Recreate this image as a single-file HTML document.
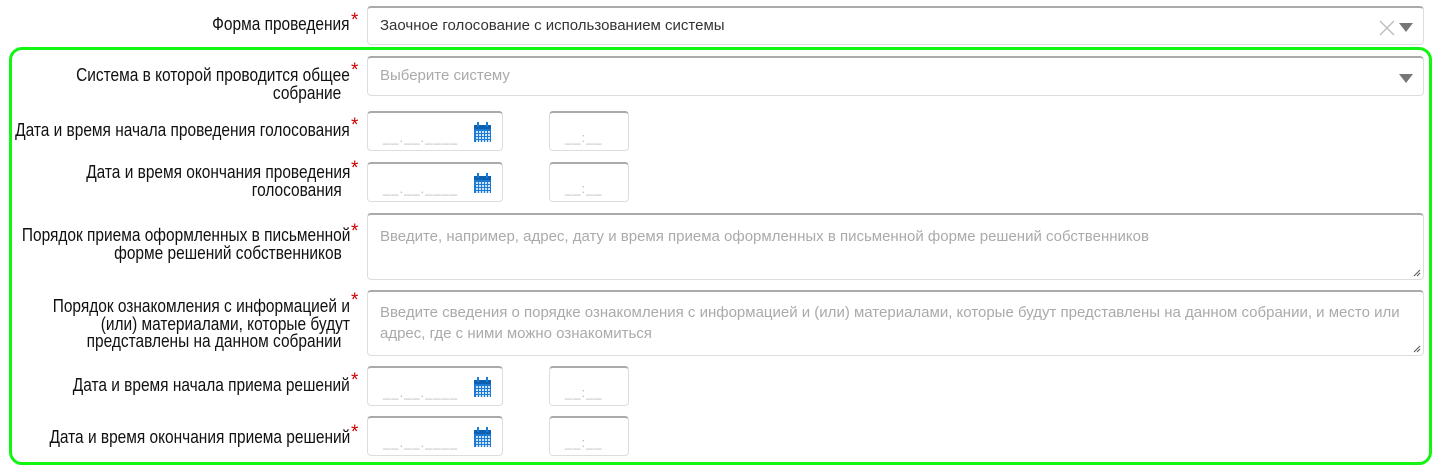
<!DOCTYPE html>
<html><head><meta charset="utf-8"><style>
body{margin:0;width:1434px;height:467px;background:#fff;position:relative;overflow:hidden;font-family:"Liberation Sans",sans-serif}
.lbl{position:absolute;right:1084px;text-align:right;font-family:"Liberation Sans",sans-serif;font-size:18.5px;line-height:17.5px;color:#111;white-space:nowrap;transform:scaleX(0.835);transform-origin:right top}
.st{position:absolute;left:351px;color:#c00;font-size:19px;font-family:"Liberation Sans",sans-serif}
.box{position:absolute;box-sizing:border-box;border:1px solid #ddd;border-top:2px solid #aaa;border-radius:4px;background:#fff;font-size:15px;color:#aaa}
.grn{position:absolute;left:9px;top:47px;width:1423px;height:418px;box-sizing:border-box;border:3.5px solid #12f512;border-radius:13px}
.ph{position:absolute;left:12px;top:9px}
.cal{position:absolute;left:105px;top:9px}
.dm{position:absolute;left:15px;top:17px;color:#bbb;font-size:13px;letter-spacing:1px}
.arr{position:absolute;right:10px;top:15px;width:0;height:0;border-left:7px solid transparent;border-right:7px solid transparent;border-top:9px solid #777}
.rs{position:absolute;right:2px;bottom:2px}
</style></head><body>
<div class="grn"></div>

<div class="lbl" style="top:15px">Форма проведения</div><div class="st" style="top:10px">*</div>
<div class="box" style="left:367px;top:6px;width:1057px;height:39px;color:#333"><span class="ph">Заочное голосование с использованием системы</span>
<svg style="position:absolute;right:28px;top:12px" width="16" height="16"><path d="M1 1L15 15M15 1L1 15" stroke="#bbb" stroke-width="1.3"/></svg><div class="arr"></div></div>

<div class="lbl" style="top:66px">Система в которой проводится общее<br>собрание&nbsp;&nbsp;</div><div class="st" style="top:60px">*</div>
<div class="box" style="left:367px;top:56px;width:1057px;height:40px"><span class="ph">Выберите систему</span><div class="arr" style="top:16px"></div></div>

<div class="lbl" style="top:121px">Дата и время начала проведения голосования</div><div class="st" style="top:115px">*</div>
<div class="lbl" style="top:163px">Дата и время окончания проведения<br>голосования&nbsp;&nbsp;</div><div class="st" style="top:158px">*</div>
<div class="lbl" style="top:226px">Порядок приема оформленных в письменной<br>форме решений собственников&nbsp;&nbsp;</div><div class="st" style="top:221px">*</div>
<div class="lbl" style="top:297px">Порядок ознакомления с информацией и<br>(или) материалами, которые будут<br>представлены на данном собрании&nbsp;&nbsp;</div><div class="st" style="top:290px">*</div>
<div class="lbl" style="top:376px">Дата и время начала приема решений</div><div class="st" style="top:370px">*</div>
<div class="lbl" style="top:428px">Дата и время окончания приема решений</div><div class="st" style="top:422px">*</div>

<div class="box" style="left:367px;top:213px;width:1057px;height:67px"><span class="ph" style="top:13px">Введите, например, адрес, дату и время приема оформленных в письменной форме решений собственников</span>
<svg class="rs" width="8" height="8"><path d="M7 1L1 7M7 4L4 7" stroke="#555" stroke-width="1"/></svg></div>
<div class="box" style="left:367px;top:290px;width:1057px;height:66px;line-height:21px"><span class="ph" style="top:10px;right:14px">Введите сведения о порядке ознакомления с информацией и (или) материалами, которые будут представлены на данном собрании, и место или адрес, где с ними можно ознакомиться</span>
<svg class="rs" width="8" height="8"><path d="M7 1L1 7M7 4L4 7" stroke="#555" stroke-width="1"/></svg></div>

<div id="d"></div>
<script>
var ys=[111,162,366,416],h='';
ys.forEach(function(y){
h+='<div class="box" style="left:367px;top:'+y+'px;width:136px;height:40px"><span class="dm">__.__.____</span><svg class="cal" width="19" height="20"><rect x="1" y="3" width="17" height="17" fill="#1a7ad6"/><rect x="1" y="3" width="17" height="4" fill="#0d5fb0"/><rect x="4" y="0" width="2" height="5" fill="#1a7ad6"/><rect x="13" y="0" width="2" height="5" fill="#1a7ad6"/>';
for(var r=0;r<4;r++)for(var c=0;c<5;c++)h+='<rect x="'+(3+c*3)+'" y="'+(9+r*3)+'" width="2" height="2" fill="#cfe4fa"/>';
h+='</svg></div><div class="box" style="left:549px;top:'+y+'px;width:80px;height:40px"><span class="dm">__:__</span></div>';
});
document.getElementById('d').innerHTML=h;
</script>
</body></html>
